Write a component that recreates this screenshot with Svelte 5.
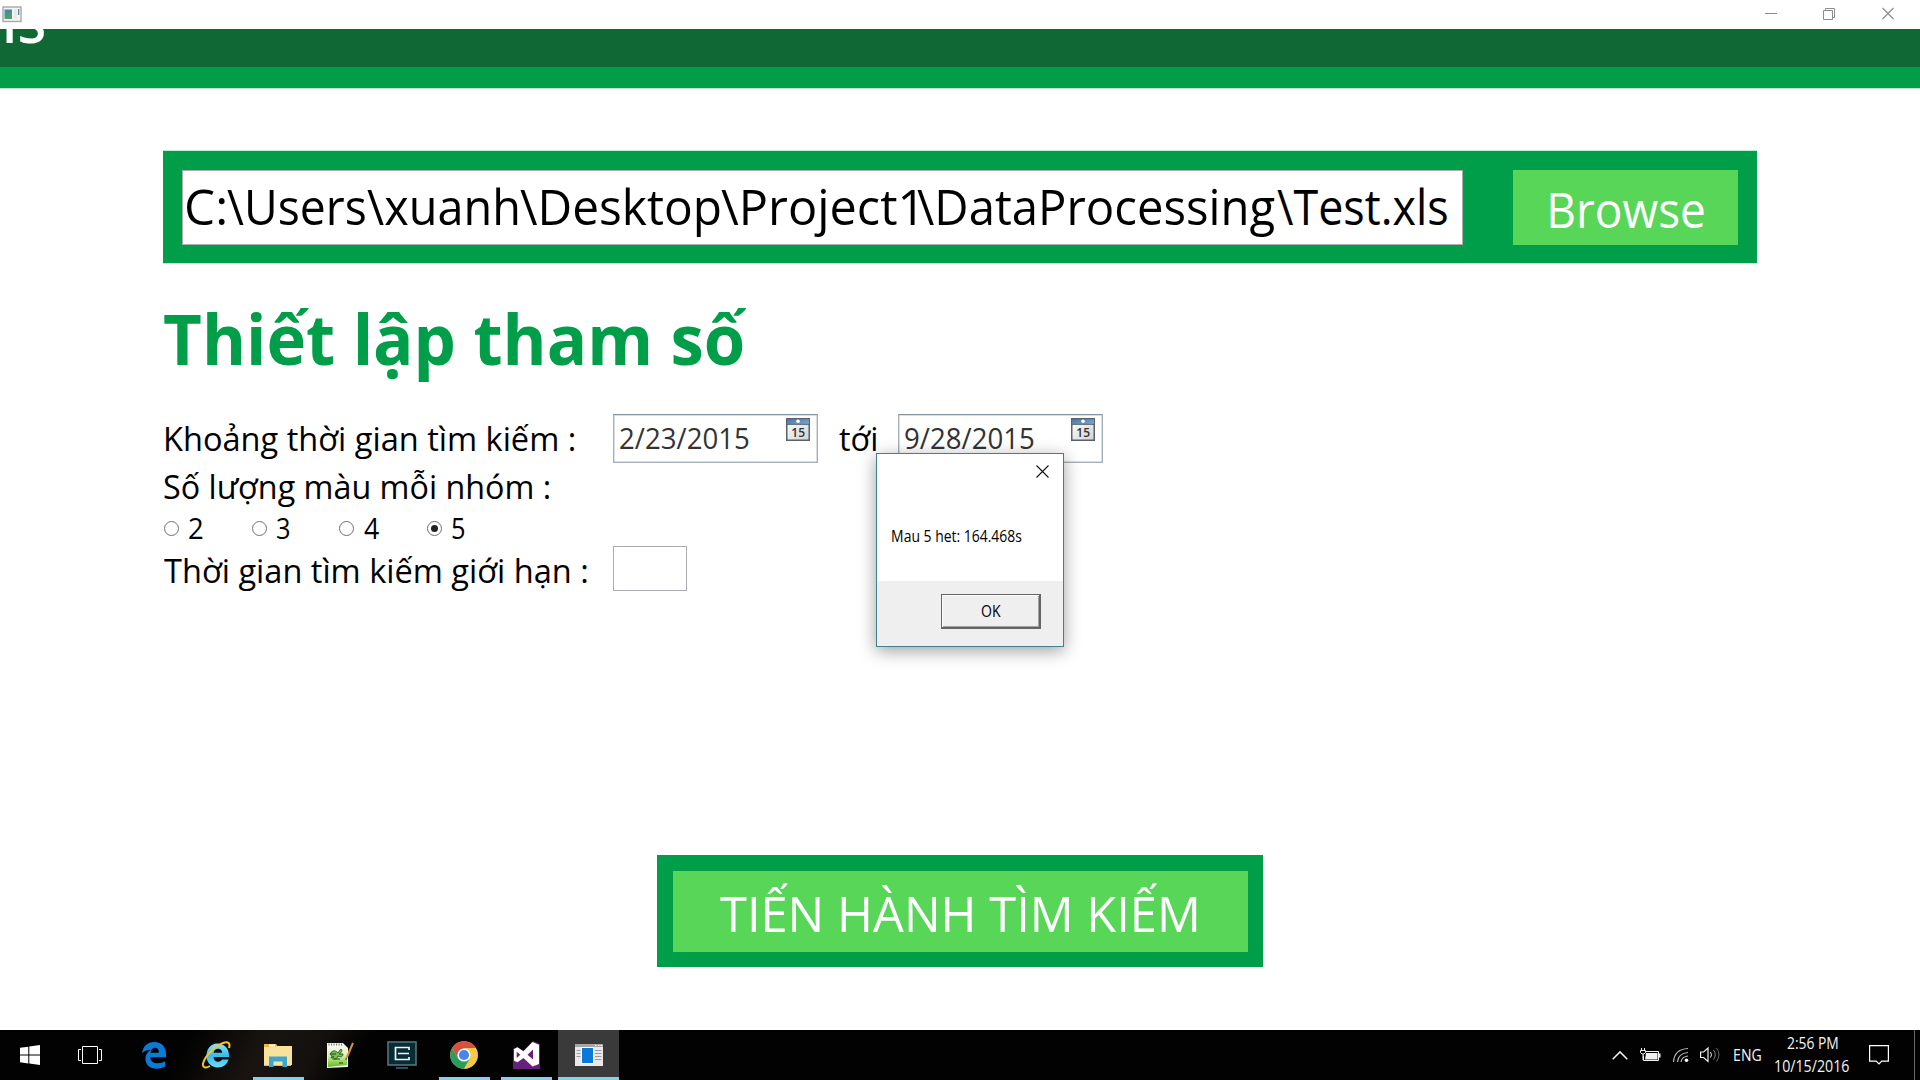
<script>
  // Stretches a text so that its visible glyphs span the given width.
  function fit(node, width) {
    const cs = getComputedStyle(node);
    const ctx = document.createElement('canvas').getContext('2d');
    ctx.font = `${cs.fontWeight} ${cs.fontSize} ${cs.fontFamily}`;
    const m = ctx.measureText(node.textContent);
    const s = width / (m.actualBoundingBoxLeft + m.actualBoundingBoxRight);
    node.style.transform = `translateX(${m.actualBoundingBoxLeft * s}px) scaleX(${s})`;
  }
  const pathParts = [
    { text: 'C:', w: 38 },
    { text: '\\Users', w: 138 },
    { text: '\\xuanh', w: 150.5 },
    { text: '\\Desktop', w: 199.5 },
    { text: '\\Project1', w: 194 },
    { text: '\\DataProcessing', w: 358 },
    { text: '\\Test.xls', w: 170 }
  ];
  const options = [
    { value: '2', w: 13.5 },
    { value: '3', w: 12.5 },
    { value: '4', w: 15 },
    { value: '5', w: 12.5 }
  ];
  let selected = $state('5');
</script>

{#snippet label(text, w)}
  <span class="fit" style:width={`${w}px`}><span class="glyphs" use:fit={w}>{text}</span></span>
{/snippet}

{#snippet calendar()}
  <svg class="calendar" width="24" height="23" viewBox="0 0 24 23">
    <defs>
      <linearGradient id="cal-top" x1="0" y1="0" x2="1" y2="1"><stop offset="0" stop-color="#44719c" /><stop offset="1" stop-color="#79aede" /></linearGradient>
      <linearGradient id="cal-page" x1="0" y1="0" x2="1" y2="1"><stop offset="0" stop-color="#fff" /><stop offset="1" stop-color="#cfd2d6" /></linearGradient>
    </defs>
    <rect x=".75" y=".75" width="22.5" height="21.5" fill="url(#cal-page)" stroke="#5a6066" stroke-width="1.5" />
    <rect x="1" y="1" width="22" height="5" fill="url(#cal-top)" />
    <circle cx="12" cy="3.2" r="1.8" fill="#fff" />
    <path d="M1 6.3H23" stroke="#4b5864" />
    <text x="12.2" y="18.6" text-anchor="middle" class="cal-day">15</text>
  </svg>
{/snippet}

<div class="screen">
  <div class="titlebar">
    <svg class="appicon" width="20" height="17" viewBox="0 0 20 17">
      <defs><linearGradient id="ai" x1="0" y1="0" x2="0" y2="1"><stop offset="0" stop-color="#4786a4" /><stop offset="1" stop-color="#53a06c" /></linearGradient></defs>
      <rect x="1" y="1" width="18" height="14.5" fill="#f4f4f4" stroke="#a5a9ac" stroke-width="1.4" />
      <rect x="2.5" y="3.5" width="7.5" height="9.5" fill="url(#ai)" />
      <rect x="12" y="3" width="3" height="10" fill="#e6e8e9" />
      <rect x="16" y="3" width="1.3" height="6" fill="#4d8d96" />
    </svg>
    <svg class="winctl" width="130" height="14" viewBox="0 0 130 14">
      <g fill="none" stroke="#8c8c8c">
        <path d="M0 6.5H12" /><path d="M58.5 3.5h9v9h-9zM60.5 3.5v-2h9v9h-2" /><path stroke-width="1.2" d="M117.5 1l11 11M128.5 1l-11 11" />
      </g>
    </svg>
  </div>
  <div class="banner"><div class="brand">{@render label('IS', 38.5)}</div></div>
  <div class="stripe"></div>

  <main>
    <section class="filebar">
      <div class="path">{#each pathParts as p}{@render label(p.text, p.w)}{/each}</div>
      <div class="browse">{@render label('Browse', 154)}</div>
    </section>

    <h1>{@render label('Thiết lập tham số', 583)}</h1>

    <div class="row dates">
      <div class="caption">{@render label('Khoảng thời gian tìm kiếm :', 408.5)}</div>
      <div class="date">{@render label('2/23/2015', 129)}{@render calendar()}</div>
      <div class="to">{@render label('tới', 37)}</div>
      <div class="date">{@render label('9/28/2015', 129)}{@render calendar()}</div>
    </div>
    <div class="row count">{@render label('Số lượng màu mỗi nhóm :', 385.5)}</div>
    <div class="row radios">
      {#each options as o}
        <div class="option">
          <span class="radio" class:on={selected === o.value}></span>
          {@render label(o.value, o.w)}
        </div>
      {/each}
    </div>
    <div class="row limit">
      <div class="caption">{@render label('Thời gian tìm kiếm giới hạn :', 423)}</div>
      <div class="limitbox"></div>
    </div>

    <div class="run"><div class="runinner">{@render label('TIẾN HÀNH TÌM KIẾM', 477)}</div></div>
  </main>

  <footer>
    <div class="task">
      <svg width="20" height="20" viewBox="0 0 20 20"><path fill="#fff" d="M0 2.8 8.3 1.7V9.5H0zM9.3 1.5 20 0V9.5H9.3zM0 10.5H8.3V18.4L0 17.2zM9.3 10.5H20V20L9.3 18.5z" /></svg>
    </div>
    <div class="task view">
      <svg width="24" height="20" viewBox="0 0 24 20"><path fill="none" stroke="#fff" d="M4.5 1.5h15v17h-15zM3 4.5H.5v11H3M21 4.5h2.5v11H21" /></svg>
    </div>
    <div class="task">
      <svg width="26" height="28" viewBox="0 0 26 28"><path fill="#0a7bd7" d="M1 12.3C2 5.200 6.500 1 13.200 1 21 1 25 6.500 25 13V16.200H9.200C9.500 20.500 13 22.300 16.500 22.300 19.600 22.300 22 21.500 24 20.300V25.600C21.500 27.100 18.500 27.800 15.500 27.800 9 27.800 4.400 23.800 4.400 17.800 4.400 14 6.400 10.700 9.700 8.700 6 9 3 10 1 12.300zM9.500 11.700H17.900C17.900 8.500 16.500 6.700 13.900 6.700 11.500 6.700 9.900 8.700 9.500 11.700z" /></svg>
    </div>
    <div class="task ie">
      <svg width="30" height="30" viewBox="0 0 30 30">
        <defs><linearGradient id="ie" x1="0" y1="0" x2="0" y2="1"><stop offset="0" stop-color="#8fe4fb" /><stop offset=".5" stop-color="#35bdec" /><stop offset="1" stop-color="#6ddcf8" /></linearGradient></defs>
        <path fill="url(#ie)" d="M16.500 3.500C23 3.500 28 8.500 28 15V17H12.500C12.700 20 14.500 21.700 17 21.700 19 21.700 20.300 20.900 21 19.500H27.600C26 24.500 22 27.500 16.800 27.500 10 27.500 5.500 22.500 5.500 15.800 5.500 8.500 10 3.500 16.500 3.500zM12.600 12.800H21.300C21 10.200 19.300 8.700 17 8.700 14.700 8.700 13 10.200 12.600 12.800z" />
        <path fill="none" stroke="#f2c230" stroke-width="2" d="M28 8C29.500 3.500 27.500 1 22 3 14 6 4 16 2 23.500 1.300 27.500 4.500 28.500 9 26" />
      </svg>
    </div>
    <div class="task open">
      <svg width="28" height="24" viewBox="0 0 28 24">
        <path fill="#e8b94a" d="M0 1h12l2 2.500h13V23H0z" /><path fill="#fff" d="M5 1.500h6v2H5z" /><path fill="#fbe29a" d="M0 4h11l2-1h15v19H0z" />
        <path fill="#3ba7cf" d="M5 13.500h18V24h-4.500v-5.500h-9V24H5z" />
      </svg>
    </div>
    <div class="task">
      <svg width="30" height="28" viewBox="0 0 30 28">
        <defs><linearGradient id="np" x1="0" y1="0" x2="0" y2="1"><stop offset="0" stop-color="#f6f8ee" /><stop offset=".4" stop-color="#e5f4b8" /><stop offset="1" stop-color="#5fbd19" /></linearGradient></defs>
        <path fill="#f4f4f4" d="M2 2H18L23 7V26L2 27z" /><path fill="url(#np)" d="M3 5H20L22 8V24L3 26z" />
        <path d="M3.500 3.500H17" stroke="#777" stroke-dasharray="1 1.500" stroke-width="2" />
        <path fill="#79bd55" stroke="#2f5e2b" d="M5 13c3-5 6-3 8-1l3-4c2 2 0 4-2 5h4c0 3-3 3-5 2-1 4-6 4-7 1h3c-2-1-3-1-4-3z" /><path d="M6 13h5M9 18h6M14 22h4" stroke="#24422c" />
        <path d="M28 2 21.500 17" stroke="#dc9626" stroke-width="2" /><path d="M21.500 17l-.7 2" stroke="#433" />
      </svg>
    </div>
    <div class="task">
      <svg class="monitor" width="30" height="28" viewBox="0 0 30 28">
        <rect x="1" y="1" width="28" height="23" fill="#082b34" stroke="#55727b" stroke-width="1.6" />
        <path fill="none" stroke="#edf5f5" stroke-width="1.700" d="M22 9V6.500H8.500V18.500H22V16M11 12.500H22" /><path d="M9 27H21" stroke="#3b7386" stroke-width="1.400" />
      </svg>
    </div>
    <div class="task open">
      <svg width="28" height="28" viewBox="0 0 28 28">
        <circle cx="14" cy="14" r="13.800" fill="#f6c944" />
        <path fill="#d94f43" d="M2.050 7.100A13.800 13.800 0 0 1 25.950 7.100H14L8 17.500z" />
        <path fill="#299c60" d="M2.050 7.100A13.800 13.800 0 0 0 14 27.800L20 17.500 8 17.500z" />
        <path fill="#f6c944" d="M14 27.800A13.800 13.800 0 0 0 25.950 7.100H14L20.300 17.400z" />
        <circle cx="14" cy="14" r="6.600" fill="#fff" /><circle cx="14" cy="14" r="5.100" fill="#4a86ea" />
      </svg>
    </div>
    <div class="task open">
      <svg width="29" height="30" viewBox="0 0 29 30">
        <path fill="#67217a" d="M1 9 5 7 11 11 21 1 28 4V29H1z" />
        <path fill="#fff" fill-rule="evenodd" d="M20.500 2 27 4.700V24L20.500 26.500 11.500 18 5.500 22.300 2 20.800V9L5.500 7.200 11.500 11.200zM21 9.500 15.500 14.700 21 19.500zM4.700 11.800V18L8.300 14.800z" />
      </svg>
    </div>
    <div class="task open active">
      <svg width="28" height="22" viewBox="0 0 28 22">
        <rect width="28" height="22" fill="#e9e9e9" /><rect width="28" height="3" fill="#a6a6a6" /><path d="M20 1.500h1.500M23 1.500h1.500M25.500 1.500h1.500" stroke="#fff" />
        <rect x="6.500" y="3.500" width="12" height="16" fill="#0b79dc" stroke="#fff" />
        <path d="M1.500 6.500h4M1.500 9.500h4M1.500 12.500h4M20 6.500h6.500M20 9.500h6.500M20 12.500h6.500M20 15.500h6.500" stroke="#9b9b9b" />
      </svg>
    </div>

    <div class="tray">
      <svg class="status" width="110" height="22" viewBox="0 0 110 22">
        <path fill="none" stroke="#f1f1f1" stroke-width="1.500" d="M.7 15.200 8 7.900 15.300 15.200" />
        <g fill="none" stroke="#f1f1f1"><path d="M33.500 7.500h13v9h-15v-5" /><path d="M47.500 9.500v4" stroke-width="2" /><path d="M29.500 4v3M32.500 4v3M28.500 6.500h5v2l-1.500 1.500h-2l-1.500-1.500zM31 10v6" /></g>
        <path fill="#f1f1f1" d="M34 9h11.500v6.500H33z" />
        <g fill="none" stroke="#b9b9b9" stroke-width="1.200"><path d="M61.500 18C62 10 67 5 76 4.500M65.500 18C66 12.500 69.500 9 76 8.500M69 18C69.500 14.500 72 12.500 76 12" /></g><circle cx="74.500" cy="16.300" r="1.800" fill="#fff" />
        <path fill="none" stroke="#f1f1f1" stroke-width="1.200" d="M88.600 8h3l4.400-4v13.500l-4.400-4h-3z" />
        <path d="M98.500 8q2 3 0 5.500" fill="none" stroke="#eee" /><path d="M101.500 6q3.500 5 0 9.500" fill="none" stroke="#888" /><path d="M104.500 4q5 6.500 0 13.500" fill="none" stroke="#666" />
      </svg>
      <div class="lang">{@render label('ENG', 27.5)}</div>
      <div class="clock">
        <div>{@render label('2:56 PM', 51)}</div>
        <div>{@render label('10/15/2016', 74.5)}</div>
      </div>
      <svg class="action" width="20" height="21" viewBox="0 0 20 21"><path fill="none" stroke="#fff" stroke-width="1.200" d="M.6.600h18.800v15.600H12.800L10 19 7.200 16.200H.6z" /></svg>
      <div class="peek"></div>
    </div>
  </footer>

  <div class="dialog">
    <svg class="close" width="13" height="13" viewBox="0 0 13 13"><path d="M.5.500l12 12M12.500.500l-12 12" stroke="#111" stroke-width="1.100" /></svg>
    <div class="message">{@render label('Mau 5 het: 164.468s', 129.5)}</div>
    <div class="actions"><div class="ok">{@render label('OK', 20)}</div></div>
  </div>
</div>

<style>
  :global(body) { margin: 0; background: #fff; overflow: hidden; }
  .screen { position: relative; width: 1920px; height: 1080px; overflow: hidden; display: flex; flex-direction: column; background: #fff; color: #000; font-family: 'Open Sans', 'Noto Sans', sans-serif; }
  .screen * { box-sizing: border-box; }
  svg { display: block; flex: none; }
  .fit { display: block; flex: none; white-space: pre; }
  .glyphs { display: inline-block; transform-origin: 0 50%; white-space: pre; }
  .titlebar { height: 29px; flex: none; display: flex; justify-content: space-between; padding: 6px 25px 0 2px; }
  .winctl { margin-top: 1px; }
  .banner { height: 38px; flex: none; background: #106834; overflow: hidden; }
  .brand { margin-top: -30px; padding-left: 6px; color: #fff; font-size: 50px; line-height: 50px; font-weight: 600; }
  .stripe { height: 21px; flex: none; background: #009e49; box-shadow: 0 1px #b9e4cc; }
  main { flex: 1; padding: 63px 163px 0; display: flex; flex-direction: column; }
  .filebar { height: 112px; flex: none; width: 1594px; background: #009e49; box-shadow: 0 -1px #b9f0d0, 0 1px #b9f0d0; padding: 19px 19px 18px; display: flex; justify-content: space-between; }
  .path { width: 1281px; height: 75px; background: #fff; border: 1px solid #abadb3; padding-left: 4px; display: flex; gap: 2px; font-size: 50px; line-height: 70px; }
  .browse { width: 225px; height: 75px; background: #57d657; color: #fff; padding-left: 36.500px; font-size: 50px; line-height: 78px; }
  h1 { margin: 30px 0 31px; padding-left: 1px; height: 90px; font-size: 70px; line-height: 90px; font-weight: 700; color: #009e49; }
  .row { display: flex; flex: none; padding-left: 1px; font-size: 33.500px; line-height: 49px; height: 48px; }
  .caption { width: 449px; flex: none; }
  .dates .caption { padding-left: 1.500px; }
  .date { width: 205px; height: 49px; border: 1px solid #a5b0ba; border-top-color: #8795a1; box-shadow: inset 0 0 0 .5px #b5bec6; padding: 0 7px 0 6px; display: flex; justify-content: space-between; font-size: 29.500px; line-height: 46px; color: #333; }
  .calendar { margin-top: 3px; }
  .cal-day { font: 600 12px 'Open Sans', sans-serif; fill: #333; }
  .to { width: 80px; padding-left: 21px; }
  .radios { height: 36px; line-height: 36px; font-size: 28.500px; }
  .option { display: flex; width: 87.700px; gap: 10px; }
  .radio { width: 15px; height: 15px; margin-top: 11px; border: 1px solid #707070; border-radius: 50%; background: #fff; flex: none; display: grid; place-items: center; }
  .radio.on::after { content: ''; width: 7px; height: 7px; border-radius: 50%; background: #222; }
  .limit { height: 46px; line-height: 48px; }
  .limitbox { width: 74px; height: 45px; border: 1px solid #abadb3; }
  .run { margin: 263px 0 0 494px; width: 606px; height: 112px; background: #009e49; padding: 16px 15px 15px 16px; flex: none; }
  .runinner { background: #57d657; height: 81px; padding-left: 46.500px; color: #fff; font-size: 50px; line-height: 85px; }
  footer { height: 50px; flex: none; display: flex; color: #f4f4f4; background: linear-gradient(118deg, transparent 170px, rgba(70, 54, 42, .35) 240px, rgba(36, 30, 24, .5) 290px, transparent 330px) #020202; }
  .task { width: 62px; height: 50px; flex: none; display: grid; place-items: center; position: relative; }
  .task:first-child { width: 60px; }
  .view { width: 63px; padding-right: 3px; }
  .ie { padding-right: 1px; }
  .open::after { content: ''; position: absolute; left: 6px; right: 5px; bottom: 0; height: 3px; background: #86cdee; }
  .active { background: #3b3a3b; width: 61px; margin-left: 1px; }
  .active::after { left: 0; right: 0; }
  .tray { margin-left: auto; display: flex; font-size: 15.500px; }
  .status { margin-top: 14px; margin-right: 1px; }
  .lang { margin-left: 11.500px; line-height: 51px; }
  .clock { margin-left: 13.500px; width: 75px; padding-top: 2px; line-height: 23px; }
  .clock > div { display: flex; justify-content: center; }
  .action { margin: 15px 0 0 19px; }
  .peek { width: 6px; margin-left: 25px; border-left: 1px solid #666; }
  .dialog { position: absolute; left: 876px; top: 453px; width: 188px; height: 194px; background: #fff; border: 1px solid #418091; box-shadow: 0 4px 16px rgba(0, 0, 0, .38); display: flex; flex-direction: column; }
  .close { margin: 11px 14px 0 auto; }
  .message { margin: 44px 0 0 14.500px; height: 59px; font-size: 15.500px; line-height: 28px; }
  .actions { flex: 1; background: #efefef; padding: 13px 22px 0 64px; }
  .ok { height: 35px; border: 1px solid #646464; border-width: 1px 2px 2px 1px; box-shadow: inset 1px 1px #fff, inset -1px -1px #a0a0a0; padding-left: 39px; font-size: 15.500px; line-height: 32px; }
</style>
